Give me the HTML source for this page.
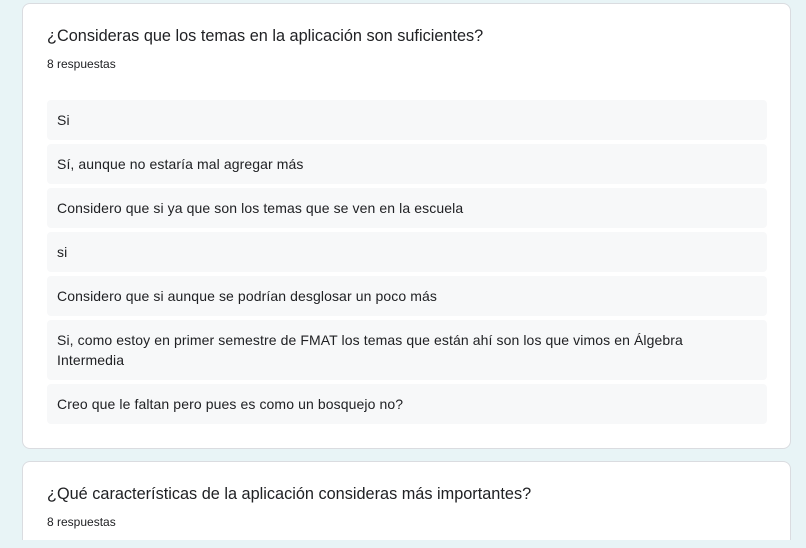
<!DOCTYPE html>
<html><head><style>
body{margin:0;width:806px;height:548px;background:#e8f4f6;font-family:"Liberation Sans",Arial,sans-serif;overflow:hidden;position:relative;color:#202124}
.card{position:absolute;left:22px;width:769px;background:#fff;border:1px solid #dadce0;border-radius:8px;box-sizing:border-box}
.t{position:absolute;left:24px;font-size:16.3px;color:#202124}
.n{position:absolute;left:24px;font-size:12px;color:#202124}
.it{position:absolute;left:24px;width:720px;background:#f7f8f9;border-radius:4px;box-sizing:border-box;padding:0 10px;font-size:14px;line-height:20px;display:flex;align-items:center;letter-spacing:0.1px}
</style></head><body>
<div class="card" style="top:3px;height:446px">
<div class="t" style="top:23px">¿Consideras que los temas en la aplicación son suficientes?</div>
<div class="n" style="top:53px">8 respuestas</div>
<div class="it" style="top:96px;height:40px">Si</div>
<div class="it" style="top:140px;height:40px">Sí, aunque no estaría mal agregar más</div>
<div class="it" style="top:184px;height:40px">Considero que si ya que son los temas que se ven en la escuela</div>
<div class="it" style="top:228px;height:40px">si</div>
<div class="it" style="top:272px;height:40px">Considero que si aunque se podrían desglosar un poco más</div>
<div class="it" style="top:316px;height:60px;display:block;padding-top:10px">Si, como estoy en primer semestre de FMAT los temas que están ahí son los que vimos en Álgebra<br>Intermedia</div>
<div class="it" style="top:380px;height:40px">Creo que le faltan pero pues es como un bosquejo no?</div>
</div>
<div class="card" style="top:461px;height:79px;border-bottom:none;border-radius:8px 8px 0 0">
<div class="t" style="top:23px">¿Qué características de la aplicación consideras más importantes?</div>
<div class="n" style="top:53px">8 respuestas</div>
</div>
</body></html>
